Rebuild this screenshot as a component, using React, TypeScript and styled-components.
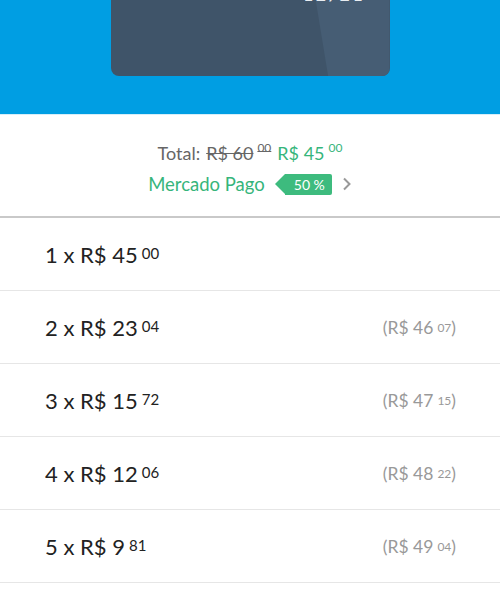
import React from 'react';
import styled, { createGlobalStyle } from 'styled-components';

const GlobalStyle = createGlobalStyle`
  html, body {
    margin: 0;
    padding: 0;
    background: #ffffff;
    font-family: 'Lato', 'Open Sans', sans-serif;
  }
`;

const Header = styled.header`
  background-color: #009ee3;
  height: 115px;
  overflow: hidden;
  display: flex;
  justify-content: center;
  align-items: flex-end;
  padding-bottom: 38px;
  box-sizing: border-box;
  border-bottom: 1px solid #d6eef9;
`;

const Card = styled.div`
  position: relative;
  width: 279px;
  height: 170px;
  flex-shrink: 0;
  background-color: #3f5469;
  border-radius: 8px;
  overflow: hidden;
  display: flex;
  flex-direction: column;
  justify-content: flex-end;
  align-items: flex-end;
  padding: 0 24px 71px;
  box-sizing: border-box;

  &::after {
    content: '';
    position: absolute;
    inset: 0;
    background-color: #465d74;
    clip-path: polygon(68% 0, 100% 0, 100% 100%, 78% 100%);
  }
`;

const CardExpiry = styled.span`
  position: relative;
  z-index: 1;
  color: #e8edf2;
  font-size: 17px;
  font-weight: 700;
  letter-spacing: 3px;
`;

const Summary = styled.section`
  display: flex;
  flex-direction: column;
  align-items: center;
  gap: 9px;
  padding: 27px 0 21px;
  border-bottom: 2px solid #c9c9c9;
`;

const TotalLine = styled.div`
  font-size: 18px;
  color: #666666;
  display: flex;
  align-items: baseline;
  gap: 6px;
`;

const OldPrice = styled.span`
  text-decoration: line-through;
  color: #666666;
`;

const NewPrice = styled.span`
  color: #36b57b;
`;

const Cents = styled.sup`
  font-size: 12px;
  vertical-align: top;
  position: relative;
  top: -2px;
  margin-left: 4px;
`;

const PromoLine = styled.div`
  display: flex;
  align-items: center;
  gap: 6px;
  color: #36b57b;
  font-size: 18.5px;
`;

const Tag = styled.span`
  position: relative;
  background-color: #3dbb7e;
  color: #ffffff;
  font-size: 14px;
  line-height: 21px;
  padding: 0 7px 0 9px;
  margin-left: 14px;
  border-radius: 0 2px 2px 0;

  &::before {
    content: '';
    position: absolute;
    left: -10px;
    top: 0;
    border-style: solid;
    border-width: 10.5px 10px 10.5px 0;
    border-color: transparent #3dbb7e transparent transparent;
  }
`;

const Chevron = styled.svg`
  width: 10px;
  height: 14px;
  margin-left: 4px;
`;

const InstallmentList = styled.ul`
  list-style: none;
  margin: 0;
  padding: 0;
`;

const InstallmentRow = styled.li`
  height: 73px;
  display: flex;
  align-items: center;
  justify-content: space-between;
  padding: 0 44px 0 45px;
  box-sizing: border-box;
  border-bottom: 1px solid #e6e6e6;
`;

const Amount = styled.span`
  font-size: 22px;
  color: #222222;
  display: flex;
  align-items: baseline;
`;

const AmountCents = styled.sup`
  font-size: 15px;
  vertical-align: top;
  position: relative;
  top: -4px;
  margin-left: 4px;
`;

const RowTotal = styled.span`
  font-size: 17.5px;
  color: #999999;
  display: flex;
  align-items: baseline;
`;

const RowTotalCents = styled.sup`
  font-size: 12px;
  vertical-align: top;
  position: relative;
  top: -2px;
  margin-left: 4px;
`;

const installments = [
  { n: 1, value: '45', cents: '00' },
  { n: 2, value: '23', cents: '04', total: '46', totalCents: '07' },
  { n: 3, value: '15', cents: '72', total: '47', totalCents: '15' },
  { n: 4, value: '12', cents: '06', total: '48', totalCents: '22' },
  { n: 5, value: '9', cents: '81', total: '49', totalCents: '04' },
  { n: 6, value: '8', cents: '30', total: '49', totalCents: '80' },
];

export default function App() {
  return (
    <>
      <GlobalStyle />
      <Header>
        <Card>
          <CardExpiry>12/21</CardExpiry>
        </Card>
      </Header>

      <Summary>
        <TotalLine>
          <span>Total:</span>
          <OldPrice>
            R$ 60<Cents>00</Cents>
          </OldPrice>
          <NewPrice>
            R$ 45<Cents>00</Cents>
          </NewPrice>
        </TotalLine>
        <PromoLine>
          <span>Mercado Pago</span>
          <Tag>50 %</Tag>
          <Chevron viewBox="0 0 10 14">
            <path d="M2 1.5 L7.5 7 L2 12.5" fill="none" stroke="#999999" strokeWidth="2" />
          </Chevron>
        </PromoLine>
      </Summary>

      <InstallmentList>
        {installments.map((item) => (
          <InstallmentRow key={item.n}>
            <Amount>
              {item.n} x R$ {item.value}
              <AmountCents>{item.cents}</AmountCents>
            </Amount>
            {item.total && (
              <RowTotal>
                (R$ {item.total}
                <RowTotalCents>{item.totalCents}</RowTotalCents>)
              </RowTotal>
            )}
          </InstallmentRow>
        ))}
      </InstallmentList>
    </>
  );
}
